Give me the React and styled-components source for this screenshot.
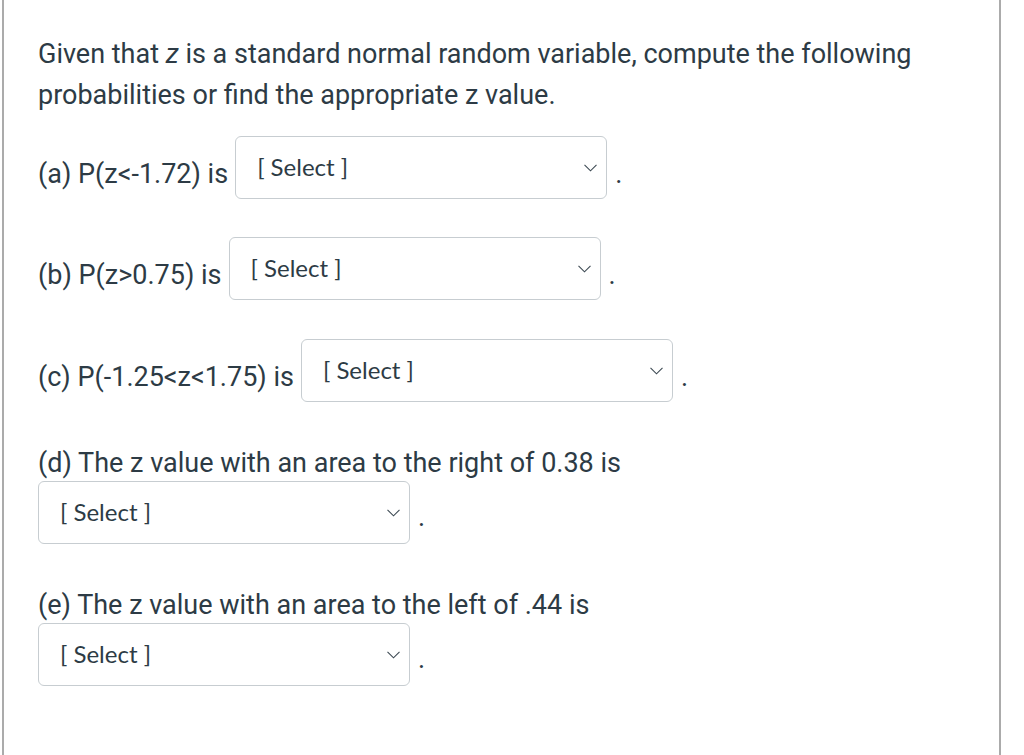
import React from "react";
import styled, { createGlobalStyle } from "styled-components";

const GlobalStyle = createGlobalStyle`
  html, body {
    margin: 0;
    padding: 0;
    background: #fff;
  }
  body {
    font-family: Roboto, "Liberation Sans", sans-serif;
    color: #2d3b45;
  }
`;

const Panel = styled.div`
  box-sizing: border-box;
  width: 999px;
  min-height: 755px;
  margin-left: 2px;
  border-left: 2px solid #ababab;
  border-right: 2px solid #ababab;
  padding: 34px 0 0 34px;
`;

const Intro = styled.p`
  margin: 0 0 20px;
  font-size: 27px;
  line-height: 41px;
`;

const Row = styled.div`
  display: flex;
  align-items: center;
  margin-bottom: ${(p) => p.$after || 38}px;
`;

const Label = styled.span`
  font-size: 27px;
  line-height: 41px;
  padding-top: 13px;
  white-space: nowrap;
`;

const Question = styled.div`
  font-size: 27px;
  line-height: 36px;
`;

const SelectBox = styled.div`
  box-sizing: border-box;
  width: 372px;
  height: 63px;
  margin-left: ${(p) => (p.$inline ? 7 : 0)}px;
  padding: 0 9px 0 21px;
  border: 1.5px solid #c7cdd1;
  border-radius: 6px;
  background: #fff;
  display: flex;
  align-items: center;
  justify-content: space-between;
  font-family: Lato, "Liberation Sans", sans-serif;
  font-size: 24px;
  color: #2d3b45;
  cursor: pointer;
`;

const SelectText = styled.span`
  margin-top: -3px;
`;

const Dot = styled.span`
  font-size: 27px;
  line-height: 41px;
  padding-top: ${(p) => p.$low || 13}px;
  margin-left: 8px;
`;

const Chevron = () => (
  <svg width="13" height="8" viewBox="0 0 13 8" fill="none">
    <polyline points="0.5,0.8 6.5,6.8 12.5,0.8" stroke="#3d4a53" strokeWidth="1.1" />
  </svg>
);

const Select = ({ inline }) => (
  <SelectBox $inline={inline} role="button">
    <SelectText>[ Select ]</SelectText>
    <Chevron />
  </SelectBox>
);

const inlineItems = [
  { label: "(a) P(z<-1.72) is", after: 38 },
  { label: "(b) P(z>0.75) is", after: 39 },
  { label: "(c) P(-1.25<z<1.75) is", after: 43 },
];

const blockItems = [
  { label: "(d) The z value with an area to the right of 0.38 is", after: 43 },
  { label: "(e) The z value with an area to the left of .44 is", after: 0 },
];

export default function App() {
  return (
    <>
      <GlobalStyle />
      <Panel>
        <Intro>
          Given that <i>z</i> is a standard normal random variable, compute the following
          <br />
          probabilities or find the appropriate z value.
        </Intro>
        {inlineItems.map((it) => (
          <Row key={it.label} $after={it.after}>
            <Label>{it.label}</Label>
            <Select inline />
            <Dot>.</Dot>
          </Row>
        ))}
        {blockItems.map((it) => (
          <div key={it.label}>
            <Question>{it.label}</Question>
            <Row $after={it.after}>
              <Select />
              <Dot $low={9}>.</Dot>
            </Row>
          </div>
        ))}
      </Panel>
    </>
  );
}
